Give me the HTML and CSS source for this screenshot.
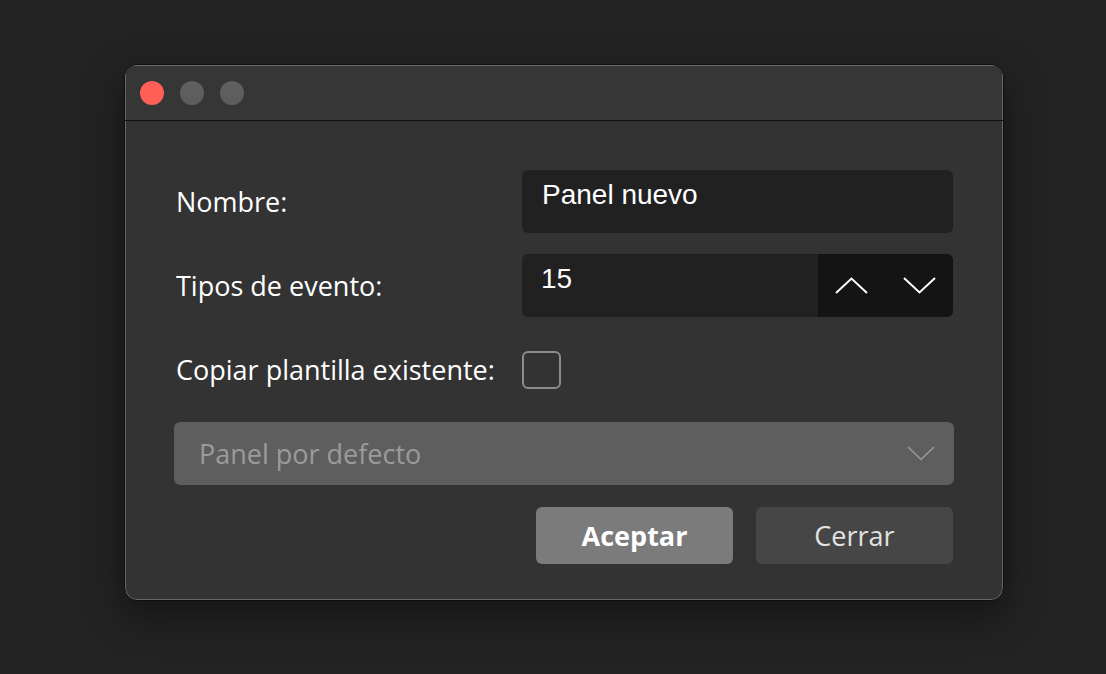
FILE: index.html
```html
<!DOCTYPE html>
<html lang="es">
<head>
<meta charset="utf-8">
<title>Panel nuevo</title>
<link rel="stylesheet" href="styles.css">
</head>
<body>
<div class="stage">
  <div class="window">
    <div class="titlebar">
      <span class="light red"></span>
      <span class="light gray"></span>
      <span class="light gray"></span>
    </div>
    <div class="content">
      <div class="form">
        <div class="label">Nombre:</div>
        <div class="field text-field">Panel nuevo</div>

        <div class="label">Tipos de evento:</div>
        <div class="field spin-field">
          <div class="spin-value">15</div>
          <div class="spin-buttons">
            <span class="spin-btn">
              <svg width="33" height="17" viewBox="0 0 33 17"><path d="M1 16 L16.5 1.5 L32 16" fill="none" stroke="#fff" stroke-width="2"/></svg>
            </span>
            <span class="spin-btn">
              <svg width="33" height="17" viewBox="0 0 33 17"><path d="M1 1 L16.5 15.5 L32 1" fill="none" stroke="#fff" stroke-width="2"/></svg>
            </span>
          </div>
        </div>

        <div class="label">Copiar plantilla existente:</div>
        <div class="check-cell"><span class="checkbox"></span></div>
      </div>

      <div class="dropdown">
        <span class="dropdown-text">Panel por defecto</span>
        <svg width="28" height="15" viewBox="0 0 28 15"><path d="M1 1 L14 13.5 L27 1" fill="none" stroke="#9a9a9a" stroke-width="1.5"/></svg>
      </div>

      <div class="actions">
        <button class="btn primary">Aceptar</button>
        <button class="btn secondary">Cerrar</button>
      </div>
    </div>
  </div>
</div>
</body>
</html>
```

FILE: styles.css
```css
* { box-sizing: border-box; }

html, body {
  margin: 0;
  padding: 0;
  background: #232323;
  width: 1106px;
  height: 674px;
  overflow: hidden;
}

.stage {
  padding: 64px 0 0 124px;
}

.window {
  width: 880px;
  height: 537px;
  background: #333333;
  border: 1px solid #0e0e0e;
  border-radius: 13px;
  box-shadow: inset 0 0 0 1px rgba(255,255,255,0.26), 0 14px 40px rgba(0,0,0,0.45);
  overflow: hidden;
  display: flex;
  flex-direction: column;
}

.titlebar {
  height: 56px;
  flex: none;
  background: #363636;
  border-bottom: 1px solid #101010;
  display: flex;
  align-items: center;
  gap: 16px;
  padding: 0 0 0 15px;
  box-shadow: inset 0 1px 0 rgba(255,255,255,0.26), inset 1px 0 0 rgba(255,255,255,0.26), inset -1px 0 0 rgba(255,255,255,0.26);
}

.light {
  width: 24px;
  height: 24px;
  border-radius: 50%;
  display: block;
}
.light.red { background: #fe5f57; }
.light.gray { background: #5e5e5e; }

.content {
  padding: 49px 49px 0 49px;
  font-family: "Open Sans", "Noto Sans", sans-serif;
  color: #ffffff;
}

.form {
  display: grid;
  grid-template-columns: 348px 431px;
  grid-auto-rows: 63px;
  row-gap: 21px;
}

.label {
  display: flex;
  align-items: center;
  font-size: 27px;
  padding-left: 2px;
  color: #ffffff;
}

.field {
  background: #212121;
  border-radius: 6px;
  font-family: "Liberation Sans", Arial, sans-serif;
  font-size: 28px;
  line-height: 28px;
  color: #ffffff;
}

.text-field {
  padding: 11px 20px;
}

.spin-field {
  display: flex;
  overflow: hidden;
}

.spin-value {
  flex: 1;
  padding: 11px 19px;
}

.spin-buttons {
  width: 135px;
  background: #141414;
  display: flex;
}

.spin-btn {
  flex: 1;
  display: flex;
  align-items: center;
  justify-content: center;
}

.check-cell {
  display: flex;
  align-items: center;
}

.checkbox {
  width: 39px;
  height: 38px;
  border: 2px solid #8c8c8c;
  border-radius: 6px;
  display: block;
}

.dropdown {
  margin-top: 21px;
  height: 63px;
  background: #5e5e5e;
  border-radius: 6px;
  display: flex;
  align-items: center;
  justify-content: space-between;
  padding: 0 19px 0 25px;
}

.dropdown-text {
  font-size: 27px;
  color: #9b9b9b;
}

.actions {
  margin-top: 22px;
  display: flex;
  justify-content: flex-end;
  gap: 23px;
  padding-right: 1px;
}

.btn {
  width: 197px;
  height: 57px;
  border: none;
  border-radius: 6px;
  font-family: "Open Sans", "Noto Sans", sans-serif;
  font-size: 27px;
  padding: 0;
}

.btn.primary {
  background: #7b7b7b;
  color: #ffffff;
  font-weight: 700;
}

.btn.secondary {
  background: #464646;
  color: #e2e2e2;
}
```
